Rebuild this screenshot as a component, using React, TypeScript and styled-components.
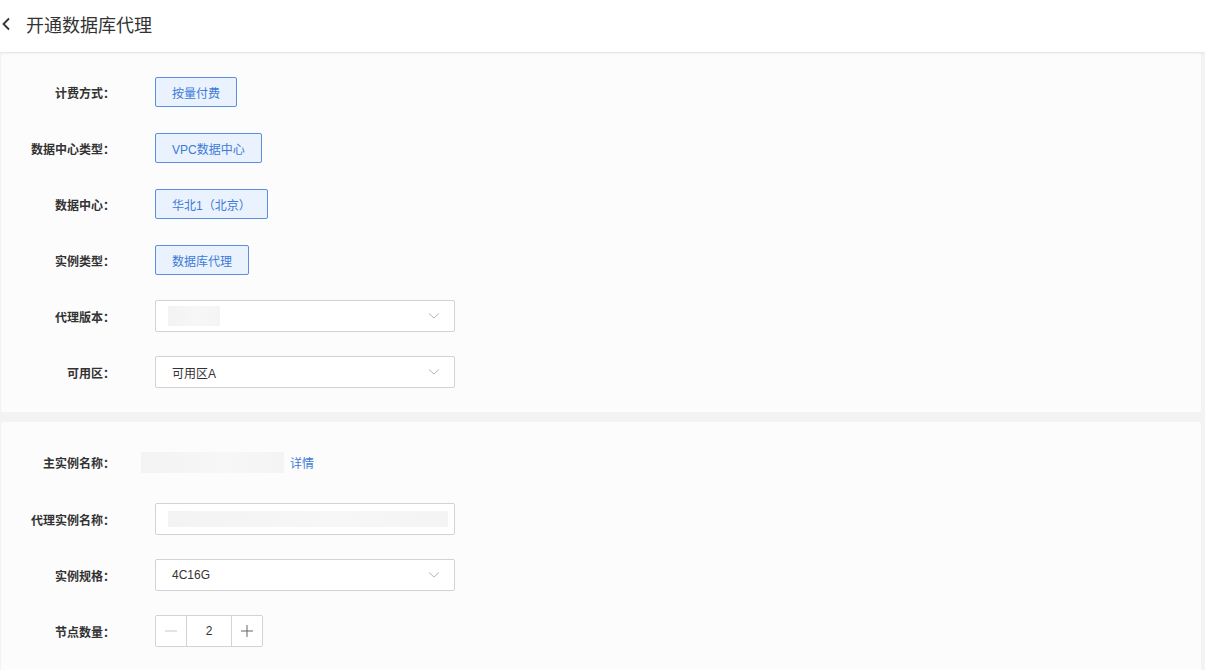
import React, { useState } from 'react';
import styled, { createGlobalStyle } from 'styled-components';

const GlobalStyle = createGlobalStyle`
  html, body {
    margin: 0;
    padding: 0;
    background: #f3f3f6;
    font-family: "Liberation Sans", "Noto Sans CJK SC", sans-serif;
    color: #333;
  }
`;

const Page = styled.div`
  width: 1205px;
  height: 670px;
  overflow: hidden;
  background: #f3f3f6;
`;

const Header = styled.header`
  height: 52px;
  background: #fff;
  display: flex;
  align-items: center;
  padding: 0 0 4px 1px;
  box-sizing: border-box;
  box-shadow: 0 1px 3px rgba(0, 0, 0, 0.08);
  position: relative;
  z-index: 1;
`;

const BackButton = styled.span`
  display: flex;
  align-items: center;
  width: 25px;
  cursor: pointer;
`;

const Title = styled.h1`
  margin: 0;
  font-size: 18px;
  font-weight: 400;
  color: #333;
`;

const Content = styled.main`
  padding: 1px 4px 0 1px;
  display: flex;
  flex-direction: column;
  gap: 10px;
`;

const Card = styled.section<{ $top?: number }>`
  background: #fcfcfc;
  border-radius: 2px;
  padding: ${p => p.$top ?? 24}px 0 24px;
  display: flex;
  flex-direction: column;
  gap: 24px;
`;

const Row = styled.div<{ $extra?: number }>`
  display: flex;
  align-items: center;
  height: 32px;
  margin-top: ${p => p.$extra ?? 0}px;
`;

const Label = styled.label`
  width: 114px;
  text-align: right;
  margin-right: 40px;
  font-size: 12px;
  font-weight: 600;
  color: #333;
  white-space: nowrap;
`;

const OptionButton = styled.button`
  height: 30px;
  padding: 0 16px;
  border: 1px solid #5b8fe0;
  border-radius: 2px;
  background: #eaf2fd;
  color: #3c7ad8;
  font-family: inherit;
  font-size: 12px;
  cursor: pointer;
`;

const SelectBox = styled.div`
  width: 300px;
  height: 32px;
  box-sizing: border-box;
  border: 1px solid #d3d3d6;
  border-radius: 2px;
  background: #fff;
  display: flex;
  align-items: center;
  padding: 0 14px 0 16px;
  font-size: 12px;
  color: #333;
`;

const SelectValue = styled.span`
  flex: 1;
  display: flex;
  align-items: center;
`;

const Redacted = styled.span<{ $w: number; $h: number; $shift?: number }>`
  display: inline-block;
  width: ${p => p.$w}px;
  height: ${p => p.$h}px;
  margin-left: ${p => p.$shift ?? 0}px;
  background: linear-gradient(90deg, #f3f3f4, #f7f7f8 60%, #f4f4f5);
`;

const DetailLink = styled.a`
  margin-left: 6px;
  font-size: 12px;
  color: #3c7ad8;
  cursor: pointer;
`;

const Stepper = styled.div`
  display: flex;
  height: 32px;
  box-sizing: border-box;
  border: 1px solid #d3d3d6;
  border-radius: 2px;
  overflow: hidden;
  background: #fff;
`;

const StepButton = styled.button<{ $disabled?: boolean }>`
  width: 30px;
  border: none;
  padding: 0;
  background: ${p => (p.$disabled ? '#f0f0f0' : '#fff')};
  display: flex;
  align-items: center;
  justify-content: center;
  cursor: ${p => (p.$disabled ? 'not-allowed' : 'pointer')};
`;

const StepValue = styled.div`
  width: 44px;
  border-left: 1px solid #d3d3d6;
  border-right: 1px solid #d3d3d6;
  display: flex;
  align-items: center;
  justify-content: center;
  font-size: 12px;
  color: #333;
`;

const Chevron = () => (
  <svg width="12" height="8" viewBox="0 0 12 8">
    <path d="M1 1.5 L6 6 L11 1.5" fill="none" stroke="#b8b8bc" strokeWidth="1" />
  </svg>
);

const BackIcon = () => (
  <svg width="10" height="14" viewBox="0 0 10 14">
    <path d="M8 1.5 L2.5 7 L8 12.5" fill="none" stroke="#333" strokeWidth="1.8" />
  </svg>
);

const Select: React.FC<{ children?: React.ReactNode }> = ({ children }) => (
  <SelectBox>
    <SelectValue>{children}</SelectValue>
    <Chevron />
  </SelectBox>
);

export default function App() {
  const [count, setCount] = useState(2);

  return (
    <Page>
      <GlobalStyle />
      <Header>
        <BackButton>
          <BackIcon />
        </BackButton>
        <Title>开通数据库代理</Title>
      </Header>

      <Content>
        <Card $top={23}>
          <Row>
            <Label>计费方式：</Label>
            <OptionButton>按量付费</OptionButton>
          </Row>
          <Row>
            <Label>数据中心类型：</Label>
            <OptionButton>VPC数据中心</OptionButton>
          </Row>
          <Row>
            <Label>数据中心：</Label>
            <OptionButton>华北1（北京）</OptionButton>
          </Row>
          <Row>
            <Label>实例类型：</Label>
            <OptionButton>数据库代理</OptionButton>
          </Row>
          <Row>
            <Label>代理版本：</Label>
            <Select>
              <Redacted $w={52} $h={20} $shift={-4} />
            </Select>
          </Row>
          <Row>
            <Label>可用区：</Label>
            <Select>可用区A</Select>
          </Row>
        </Card>

        <Card>
          <Row>
            <Label>主实例名称：</Label>
            <Redacted $w={143} $h={21} $shift={-14} />
            <DetailLink>详情</DetailLink>
          </Row>
          <Row $extra={1}>
            <Label>代理实例名称：</Label>
            <Select>
              <Redacted $w={280} $h={16} $shift={-4} />
            </Select>
          </Row>
          <Row>
            <Label>实例规格：</Label>
            <Select>4C16G</Select>
          </Row>
          <Row>
            <Label>节点数量：</Label>
            <Stepper>
              <StepButton $disabled={count <= 1} onClick={() => setCount(c => Math.max(1, c - 1))}>
                <svg width="14" height="14" viewBox="0 0 14 14">
                  <path d="M1 7 H13" stroke="#c8c8cc" strokeWidth="1" />
                </svg>
              </StepButton>
              <StepValue>{count}</StepValue>
              <StepButton onClick={() => setCount(c => c + 1)}>
                <svg width="14" height="14" viewBox="0 0 14 14">
                  <path d="M1 7 H13 M7 1 V13" stroke="#666" strokeWidth="1" />
                </svg>
              </StepButton>
            </Stepper>
          </Row>
        </Card>
      </Content>
    </Page>
  );
}
